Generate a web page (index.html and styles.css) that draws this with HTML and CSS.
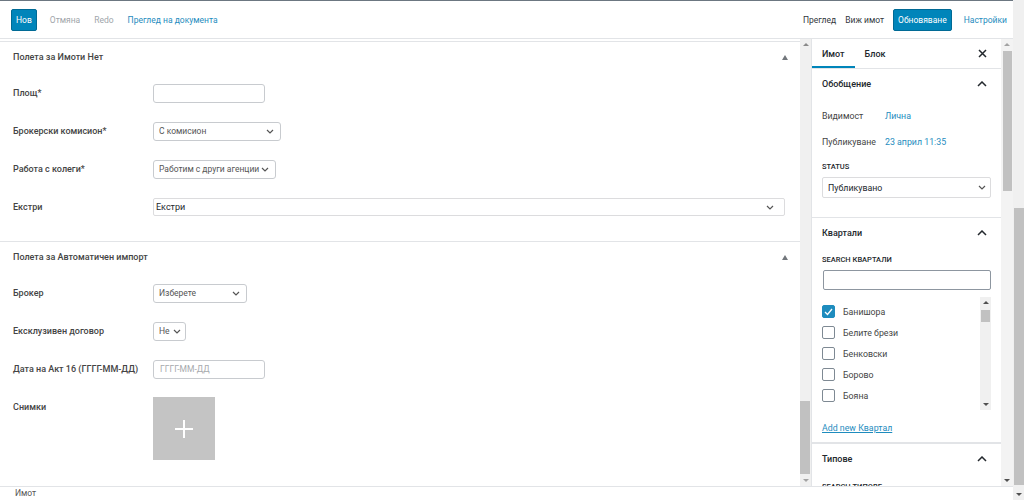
FILE: index.html
```html
<!DOCTYPE html>
<html>
  <head>
    <title>Имот</title>
    <link rel="stylesheet" href="styles.css">
  </head>
  <body>
    <div class="screen">
      <div class="app">

        <header class="topbar">
          <div class="tb-group">
            <button class="btn-primary">Нов</button>
            <span class="tb-link muted">Отмяна</span>
            <span class="tb-link muted">Redo</span>
            <span class="tb-link blue">Преглед на документа</span>
          </div>
          <div class="tb-group right">
            <span class="tb-link">Преглед</span>
            <span class="tb-link">Виж имот</span>
            <button class="btn-primary">Обновяване</button>
            <span class="tb-link blue">Настройки</span>
          </div>
        </header>

        <div class="workspace">
          <main class="editor">

            <section class="metabox first">
              <div class="metabox-head">
                <span class="metabox-title">Полета за Имоти Нет</span>
                <span class="tri-up"></span>
              </div>
              <div class="metabox-body">
                <div class="field-row">
                  <label class="field-label">Площ*</label>
                  <div class="text-input w112"></div>
                </div>
                <div class="field-row">
                  <label class="field-label">Брокерски комисион*</label>
                  <div class="select w128">
                    <span>С комисион</span>
                    <svg class="chev" width="8" height="5" viewBox="0 0 8 5"><polyline points="1,1 4,4 7,1" /></svg>
                  </div>
                </div>
                <div class="field-row">
                  <label class="field-label">Работа с колеги*</label>
                  <div class="select w123">
                    <span>Работим с други агенции</span>
                    <svg class="chev" width="8" height="5" viewBox="0 0 8 5"><polyline points="1,1 4,4 7,1" /></svg>
                  </div>
                </div>
                <div class="field-row">
                  <label class="field-label">Екстри</label>
                  <div class="select multi">
                    <span>Екстри</span>
                    <svg class="chev" width="8" height="5" viewBox="0 0 8 5"><polyline points="1,1 4,4 7,1" /></svg>
                  </div>
                </div>
              </div>
            </section>

            <section class="metabox">
              <div class="metabox-head">
                <span class="metabox-title">Полета за Автоматичен импорт</span>
                <span class="tri-up"></span>
              </div>
              <div class="metabox-body">
                <div class="field-row">
                  <label class="field-label">Брокер</label>
                  <div class="select w94">
                    <span>Изберете</span>
                    <svg class="chev" width="8" height="5" viewBox="0 0 8 5"><polyline points="1,1 4,4 7,1" /></svg>
                  </div>
                </div>
                <div class="field-row">
                  <label class="field-label">Ексклузивен договор</label>
                  <div class="select w32">
                    <span>Не</span>
                    <svg class="chev" width="8" height="5" viewBox="0 0 8 5"><polyline points="1,1 4,4 7,1" /></svg>
                  </div>
                </div>
                <div class="field-row">
                  <label class="field-label">Дата на Акт 16 (ГГГГ-ММ-ДД)</label>
                  <div class="text-input w112 placeholder">ГГГГ-ММ-ДД</div>
                </div>
                <div class="field-row top">
                  <label class="field-label">Снимки</label>
                  <div class="photo-add">
                    <svg width="20" height="20" viewBox="0 0 20 20"><path d="M10 1v18M1 10h18" /></svg>
                  </div>
                </div>
              </div>
            </section>

          </main>

          <div class="scrollbar main-scroll">
            <span class="arr-up"></span>
            <div class="track"><div class="thumb"></div></div>
            <span class="arr-down"></span>
          </div>

          <aside class="sidebar">
            <div class="tabs">
              <span class="tab active">Имот</span>
              <span class="tab">Блок</span>
              <svg class="close" width="9" height="9" viewBox="0 0 9 9"><path d="M1 1l7 7M8 1l-7 7" /></svg>
            </div>

            <div class="panel">
              <div class="panel-head">
                <span>Обобщение</span>
                <svg class="chev-up" width="10" height="6" viewBox="0 0 10 6"><polyline points="1,5 5,1 9,5" /></svg>
              </div>
              <div class="summary-row"><span class="summary-key">Видимост</span><span class="link">Лична</span></div>
              <div class="summary-row"><span class="summary-key">Публикуване</span><span class="link">23 април 11:35</span></div>
              <div class="caps">STATUS</div>
              <div class="select side-select">
                <span>Публикувано</span>
                <svg class="chev" width="8" height="5" viewBox="0 0 8 5"><polyline points="1,1 4,4 7,1" /></svg>
              </div>
            </div>

            <div class="panel">
              <div class="panel-head">
                <span>Квартали</span>
                <svg class="chev-up" width="10" height="6" viewBox="0 0 10 6"><polyline points="1,5 5,1 9,5" /></svg>
              </div>
              <div class="caps search-caps">SEARCH КВАРТАЛИ</div>
              <div class="side-input"></div>
              <div class="checklist">
                <ul class="terms">
                  <li><span class="cb checked"><svg width="9" height="8" viewBox="0 0 9 8"><polyline points="1,4 3.5,6.5 8,1" /></svg></span>Банишора</li>
                  <li><span class="cb"></span>Белите брези</li>
                  <li><span class="cb"></span>Бенковски</li>
                  <li><span class="cb"></span>Борово</li>
                  <li><span class="cb"></span>Бояна</li>
                  <li><span class="cb"></span></li>
                </ul>
                <div class="scrollbar list-scroll">
                  <span class="arr-up"></span>
                  <div class="track"><div class="thumb"></div></div>
                  <span class="arr-down"></span>
                </div>
              </div>
              <a class="add-term">Add new Квартал</a>
            </div>

            <div class="panel last">
              <div class="panel-head">
                <span>Типове</span>
                <svg class="chev-up" width="10" height="6" viewBox="0 0 10 6"><polyline points="1,5 5,1 9,5" /></svg>
              </div>
              <div class="caps types-caps">SEARCH ТИПОВЕ</div>
            </div>
          </aside>

          <div class="scrollbar side-scroll">
            <span class="arr-up"></span>
            <div class="track"><div class="thumb"></div></div>
            <span class="arr-down"></span>
          </div>
        </div>

        <footer class="statusbar">Имот</footer>
      </div>

      <div class="scrollbar win-scroll">
        <div class="track"><div class="thumb"></div></div>
        <span class="arr-down"></span>
      </div>
    </div>
  </body>
</html>
```

FILE: styles.css
```css
* {
  box-sizing: border-box;
}
body {
  margin: 0;
  font-family: Roboto, "Liberation Sans", sans-serif;
  color: #23282d;
  background-color: white;
}
.screen {
  display: flex;
  width: 1024px;
  height: 500px;
  overflow: hidden;
}
.app {
  width: 1013px;
  display: flex;
  flex-direction: column;
}

/* top toolbar */
.topbar {
  height: 39px;
  border-top: 1px solid #6c7781;
  border-bottom: 1px solid #e2e4e7;
  display: flex;
  align-items: center;
  justify-content: space-between;
  padding: 0 6px 0 11px;
  font-size: 8.5px;
}
.tb-group {
  display: flex;
  align-items: center;
  gap: 14px;
}
.tb-group.right {
  gap: 9px;
}
.tb-link {
  color: #32373c;
}
.tb-link.muted {
  color: #a0a5aa;
}
.tb-link.blue {
  color: #1e8cbe;
}
.tb-group.right .tb-link.blue {
  margin-left: 3px;
}
.btn-primary {
  height: 22px;
  padding: 0 4px;
  border: 1px solid #006a95;
  border-radius: 2px;
  background-color: #0085ba;
  color: white;
  font-family: inherit;
  font-size: 8.5px;
}
.tb-group:first-child .btn-primary {
  margin-right: -1px;
}

/* layout */
.workspace {
  flex: 1;
  display: flex;
  min-height: 0;
}
.editor {
  width: 800px;
  padding-top: 2px;
  overflow: hidden;
}

/* meta boxes */
.metabox {
  border-top: 1px solid #e2e4e7;
  padding-bottom: 15px;
}
.metabox-head {
  height: 29px;
  display: flex;
  align-items: center;
  justify-content: space-between;
  padding: 1px 12px 0 13px;
}
.metabox-title {
  font-size: 9px;
  font-weight: 500;
  color: #444;
}
.tri-up {
  width: 0;
  height: 0;
  border-left: 3.5px solid transparent;
  border-right: 3.5px solid transparent;
  border-bottom: 5px solid #72777c;
}
.metabox-body {
  padding-top: 3px;
}
.field-row {
  height: 38px;
  display: flex;
  align-items: center;
}
.field-row.top {
  height: auto;
  align-items: flex-start;
  padding-top: 9px;
}
.field-row.top .field-label {
  margin-top: 5px;
}
.field-label {
  width: 153px;
  padding-left: 13px;
  font-size: 9px;
  font-weight: 500;
  color: #444;
}
.text-input {
  height: 19px;
  border: 1px solid #c8cbcf;
  border-radius: 3px;
  background-color: white;
}
.text-input.placeholder {
  padding-left: 6px;
  font-size: 8.5px;
  line-height: 17px;
  color: #a7aaad;
}
.select {
  height: 19px;
  display: flex;
  align-items: center;
  justify-content: space-between;
  padding: 0 6px 0 5px;
  border: 1px solid #c8cbcf;
  border-radius: 3px;
  font-size: 8.5px;
  color: #555;
  white-space: nowrap;
}
.select.multi {
  width: 632px;
  height: 18px;
  padding-left: 2px;
  padding-right: 10px;
  border-color: #dcdcde;
  border-radius: 2px;
  color: #23282d;
  font-size: 9px;
}
.chev {
  flex: none;
  fill: none;
  stroke: #555;
  stroke-width: 1.2;
}
.w112 { width: 112px; }
.w128 { width: 128px; }
.w123 { width: 123px; }
.w94 { width: 94px; }
.w32 {
  width: 33px;
  padding-right: 4px;
  gap: 3px;
}
.photo-add {
  width: 62px;
  height: 63px;
  background-color: #c4c4c4;
  display: flex;
  align-items: center;
  justify-content: center;
}
.photo-add svg {
  stroke: white;
  stroke-width: 2;
}

/* scrollbars */
.scrollbar {
  flex: none;
  display: flex;
  flex-direction: column;
  align-items: center;
  background-color: #f0f0f0;
}
.scrollbar .track {
  flex: 1;
  width: 100%;
  display: flex;
  flex-direction: column;
}
.thumb {
  background-color: #c1c1c1;
}
.arr-up,
.arr-down {
  flex: none;
  width: 0;
  height: 0;
  margin: 4px 0;
  border-left: 3px solid transparent;
  border-right: 3px solid transparent;
}
.arr-up {
  border-bottom: 3px solid #505050;
}
.arr-down {
  border-top: 3px solid #505050;
}
.main-scroll {
  width: 11px;
}
.main-scroll .track {
  padding: 351px 1px 0 0;
}
.main-scroll .thumb {
  height: 73px;
}
.main-scroll .arr-up {
  border-bottom-color: #8a8a8a;
}
.main-scroll .arr-down {
  border-top-color: #a3a3a3;
}
.side-scroll {
  width: 12px;
  background-color: #f3f3f3;
}
.side-scroll .track {
  padding: 1px 1px 0 2px;
}
.side-scroll .thumb {
  height: 140px;
}
.side-scroll .arr-up {
  border-bottom-color: #a3a3a3;
}
.win-scroll {
  width: 11px;
  height: 500px;
}
.win-scroll .track {
  padding: 208px 0 0 1px;
}
.win-scroll .thumb {
  height: 277px;
}

/* sidebar */
.sidebar {
  width: 190px;
  border-left: 1px solid #e2e4e7;
  overflow: hidden;
  font-size: 8.8px;
}
.tabs {
  height: 30px;
  display: flex;
  align-items: stretch;
  border-bottom: 1px solid #e2e4e7;
}
.tab {
  display: flex;
  align-items: center;
  padding: 0 10px;
  font-size: 9px;
  font-weight: 500;
  color: #23282d;
}
.tab.active {
  box-shadow: inset 0 -2px #0085ba;
}
.close {
  margin: auto 14px auto auto;
  stroke: #23282d;
  stroke-width: 1.5;
}
.panel {
  padding: 0 10px 19px 10px;
  border-bottom: 1px solid #e2e4e7;
}
.panel-head {
  height: 30px;
  display: flex;
  align-items: center;
  justify-content: space-between;
  padding-right: 4px;
  font-size: 9px;
  font-weight: 500;
  color: #23282d;
}
.chev-up {
  fill: none;
  stroke: #23282d;
  stroke-width: 1.5;
}
.panel-head + .summary-row {
  margin-top: 4px;
}
.summary-row {
  height: 26px;
  display: flex;
  align-items: center;
  color: #444;
}
.summary-key {
  width: 63px;
}
.link {
  color: #1e8cbe;
}
.caps {
  height: 12px;
  margin-top: 6px;
  font-size: 7.5px;
  font-weight: 500;
  color: #23282d;
  line-height: 12px;
}
.side-select {
  margin-top: 4px;
  height: 21px;
  padding-left: 5px;
  padding-right: 4px;
  color: #23282d;
  border-color: #dcdcde;
  border-radius: 2px;
  font-size: 8.8px;
}
.search-caps {
  margin-top: 6px;
}
.side-input {
  margin-top: 4px;
  height: 20px;
  margin-left: 1px;
  border: 1px solid #8d96a0;
  border-radius: 2px;
}
.checklist {
  margin-top: 7px;
  height: 113px;
  display: flex;
  overflow: hidden;
}
.terms {
  flex: 1;
  list-style: none;
  margin: 0;
  padding: 4px 0 0 0;
}
.terms li {
  height: 21px;
  display: flex;
  align-items: center;
  gap: 8px;
  color: #444;
}
.cb {
  flex: none;
  width: 13px;
  height: 13px;
  border: 1px solid #7e8993;
  border-radius: 2px;
  display: flex;
  align-items: center;
  justify-content: center;
}
.cb.checked {
  background-color: #1e8cbe;
  border-color: #1e8cbe;
}
.cb svg {
  fill: none;
  stroke: white;
  stroke-width: 1.3;
}
.list-scroll {
  width: 11px;
}
.list-scroll .track {
  padding: 2px 1px 0 1px;
}
.list-scroll .thumb {
  height: 12px;
}
.add-term {
  display: block;
  margin-top: 12px;
  color: #1e8cbe;
  text-decoration: underline;
  line-height: 12px;
}
.panel:nth-of-type(3) {
  padding-bottom: 8px;
  border-bottom-width: 2px;
}
.panel.last {
  border-bottom: none;
}
.types-caps {
  margin-top: 7px;
}

/* footer */
.statusbar {
  height: 14px;
  flex: none;
  border-top: 1px solid #e2e4e7;
  padding-left: 15px;
  font-size: 8.5px;
  line-height: 13px;
  color: #555;
  background-color: white;
}
```
